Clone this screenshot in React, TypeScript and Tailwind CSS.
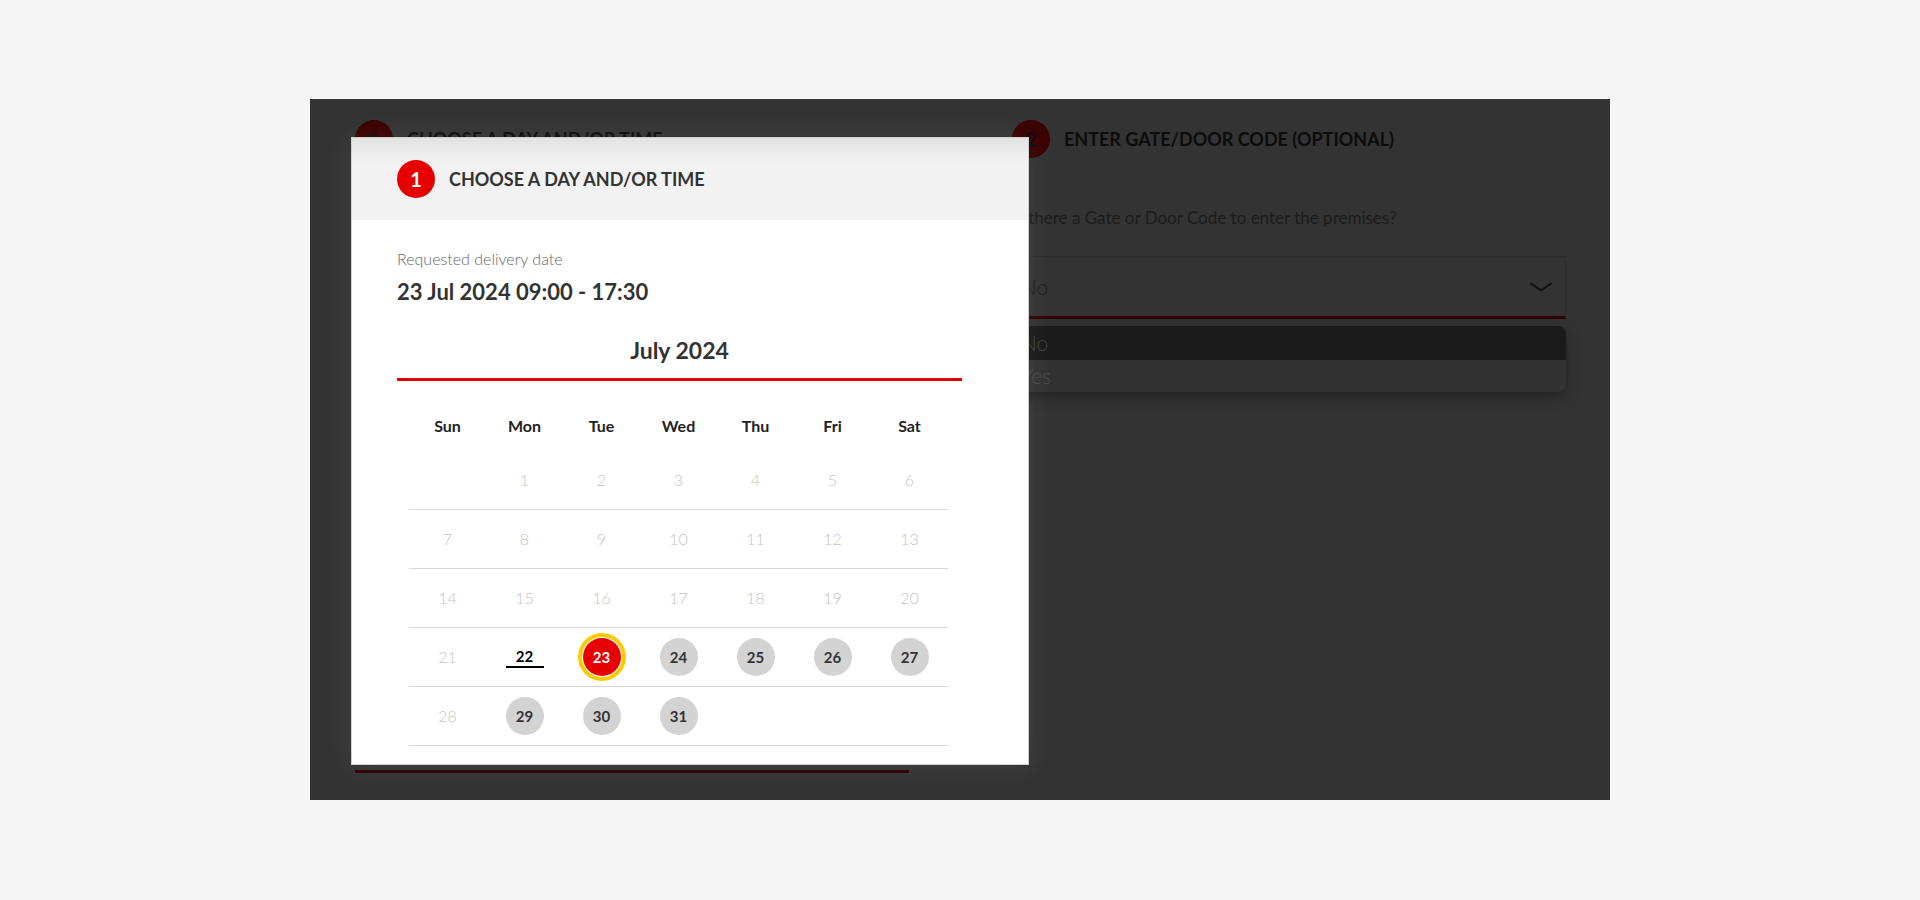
type Day = { n: number; kind: 'off' | 'open' | 'today' | 'selected' } | null

const weekdays = ['Sun', 'Mon', 'Tue', 'Wed', 'Thu', 'Fri', 'Sat']

function buildWeeks(): Day[][] {
    const cells: Day[] = [null]
    for (let n = 1; n <= 31; n++) {
        let kind: 'off' | 'open' | 'today' | 'selected' = 'off'
        if (n === 22) kind = 'today'
        else if (n === 23) kind = 'selected'
        else if (n > 23 && n !== 28) kind = 'open'
        cells.push({ n, kind })
    }
    while (cells.length % 7) cells.push(null)
    const weeks: Day[][] = []
    for (let i = 0; i < cells.length; i += 7) weeks.push(cells.slice(i, i + 7))
    return weeks
}

function DayCell({ day }: { day: Day }) {
    if (!day) return <div />
    if (day.kind === 'off') {
        return (
            <div className="flex items-center justify-center text-[16px] font-light text-[#c4c4c4]">
                {day.n}
            </div>
        )
    }
    if (day.kind === 'today') {
        return (
            <div className="flex items-center justify-center">
                <span className="flex flex-col items-center">
                    <span className="text-[15px] leading-[18px] font-bold text-black">{day.n}</span>
                    <span className="mt-[1px] w-[38px] h-[2px] bg-black" />
                </span>
            </div>
        )
    }
    if (day.kind === 'selected') {
        return (
            <div className="flex items-center justify-center">
                <span className="flex items-center justify-center w-[38px] h-[38px] rounded-full bg-[#e60000] text-white text-[15px] font-bold shadow-[0_0_0_1px_#fff,0_0_0_5px_#fecb00]">
                    {day.n}
                </span>
            </div>
        )
    }
    return (
        <div className="flex items-center justify-center">
            <span className="flex items-center justify-center w-[38px] h-[38px] rounded-full bg-[#d3d3d3] text-[#333] text-[15px] font-bold">
                {day.n}
            </span>
        </div>
    )
}

function StepBadge({ n, dim }: { n: number; dim?: boolean }) {
    return (
        <span
            className={`flex items-center justify-center w-[38px] h-[38px] rounded-full text-[20px] font-bold shrink-0 ${
                dim ? 'bg-[#3a0000] text-[#0d0d0d]' : 'bg-[#e60000] text-white'
            }`}
        >
            {n}
        </span>
    )
}

export default function App() {
    const weeks = buildWeeks()

    return (
        <div className="relative w-[1920px] h-[900px] bg-[#f5f5f5] font-['Lato',sans-serif] overflow-hidden">
            {/* Dimmed page behind the modal */}
            <div className="absolute left-[310px] top-[99px] w-[1300px] h-[701px] bg-[#333333]">
                <div className="grid grid-cols-[554px_554px] gap-x-[103px] px-[45px]">
                    {/* Step 1 column */}
                    <div className="flex flex-col">
                        <div className="flex items-center gap-[14px] h-[79px] pt-[1px]">
                            <StepBadge n={1} dim />
                            <span className="text-[18px] font-bold text-[#0c0c0c] uppercase">Choose a day and/or time</span>
                        </div>
                        <div className="mt-[532px] h-[63px] border-b-[3px] border-[#2e0000]" />
                    </div>

                    {/* Step 2 column */}
                    <div className="flex flex-col">
                        <div className="flex items-center gap-[14px] h-[79px] pt-[1px]">
                            <StepBadge n={2} dim />
                            <span className="text-[18px] font-bold text-[#0c0c0c] uppercase">Enter gate/door code (optional)</span>
                        </div>
                        <p className="mt-[28px] text-[17px] leading-[24px] text-[#1c1c1c]">
                            Is there a Gate or Door Code to enter the premises?
                        </p>
                        <div className="relative mt-[26px]">
                            <div className="flex items-center justify-between h-[63px] pl-[8px] pr-[13px] border border-[#2d2d2d] border-b-[3px] border-b-[#340000]">
                                <span className="text-[21px] font-light text-[#1c1c1c]">No</span>
                                <svg width="22" height="10" viewBox="0 0 22 10" fill="none" aria-hidden="true">
                                    <path d="M1 1.5 L11 8.5 L21 1.5" stroke="#111" strokeWidth="2" strokeLinecap="round" strokeLinejoin="round" />
                                </svg>
                            </div>
                            <div className="absolute left-0 right-0 top-[70px] rounded-lg bg-[#323232] shadow-[0_4px_14px_rgba(0,0,0,0.35)] overflow-hidden">
                                <div className="h-[34px] pl-[9px] flex items-center bg-[#1a1a1a] text-[21px] font-light text-[#404040]">No</div>
                                <div className="h-[32px] pl-[9px] flex items-center text-[21px] font-light text-[#4c4c4c]">Yes</div>
                            </div>
                        </div>
                    </div>
                </div>
            </div>

            {/* Calendar modal */}
            <div className="absolute left-[351px] top-[137px] w-[678px] bg-white border border-[#cfcfcf] shadow-[0_0_30px_rgba(255,255,255,0.08)]">
                <div className="flex items-center gap-[14px] h-[82px] pl-[45px] bg-[linear-gradient(#e2e2e2,#f2f2f2_30%)]">
                    <StepBadge n={1} />
                    <span className="text-[18px] font-bold text-[#333] uppercase">Choose a day and/or time</span>
                </div>

                <div className="pl-[45px] pr-[66px] pt-[29px] pb-[18px]">
                    <p className="text-[16px] leading-[20px] font-light text-[#666]">Requested delivery date</p>
                    <p className="mt-[10px] text-[22px] leading-[26px] font-bold text-[#333]">23 Jul 2024 09:00 - 17:30</p>

                    <p className="mt-[31px] text-center text-[23px] leading-[28px] font-bold text-[#333]">July 2024</p>
                    <div className="mt-[14px] h-[3px] bg-[#e60000]" />

                    <div className="mt-[20px] ml-[12px] w-[539px]">
                        <div className="grid grid-cols-7 h-[50px]">
                            {weekdays.map((d) => (
                                <div key={d} className="flex items-center justify-center text-[16px] font-bold text-[#222]">
                                    {d}
                                </div>
                            ))}
                        </div>
                        {weeks.map((week, i) => (
                            <div key={i} className="grid grid-cols-7 h-[59px] border-b border-[#d8d8d8]">
                                {week.map((day, j) => (
                                    <DayCell key={j} day={day} />
                                ))}
                            </div>
                        ))}
                    </div>
                </div>
            </div>
        </div>
    )
}
